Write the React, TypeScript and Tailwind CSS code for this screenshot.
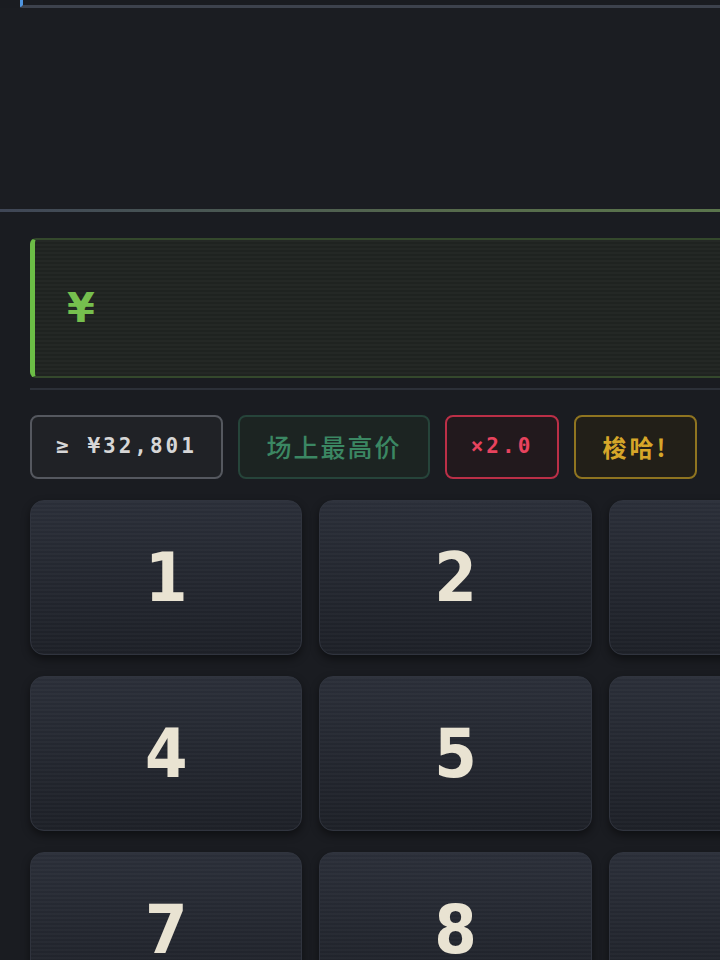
import React from "react";

const scan =
  "bg-[repeating-linear-gradient(180deg,rgba(255,255,255,0.025)_0px,rgba(255,255,255,0.025)_2px,rgba(0,0,0,0)_2px,rgba(0,0,0,0)_4px)]";

function Key({ label }: { label: string }) {
  return (
    <div className="relative h-[155px] rounded-[14px] border border-[#30343e] bg-gradient-to-b from-[#2a2e38] to-[#1d2027] shadow-[0_4px_8px_rgba(0,0,0,0.45)] flex items-center justify-center overflow-hidden">
      <div className={`absolute inset-0 ${scan}`} />
      <span className="relative text-[68px] font-bold leading-none text-[#e9e3d2] [font-family:'DejaVu_Sans_Condensed','DejaVu_Sans',sans-serif]">
        {label}
      </span>
    </div>
  );
}

export default function App() {
  const keys = ["1", "2", "3", "4", "5", "6", "7", "8", "9"];
  return (
    <div className="w-[720px] h-[960px] overflow-hidden bg-[#1a1c21] [font-family:'Noto_Sans','Noto_Sans_CJK_SC',sans-serif]">
      <div className="w-[911px]">
        {/* top panel remnant */}
        <div className="ml-[20px] h-[8px] border-l-[3px] border-b-[3px] border-l-[#4f95e0] border-b-[#3d424d] rounded-bl-[2px]" />
        <div className="h-[201px] bg-[#1b1d22]" />
        <div className="h-[3px] bg-gradient-to-r from-[#3f4656] via-[#566a4c] to-[#5d7d4c]" />

        <div className="px-[30px] pt-[26px]">
          {/* input */}
          <div className="relative h-[140px] rounded-[6px] border-2 border-[#34482c] border-l-[5px] border-l-[#6cbd46] bg-[#1f2320] flex items-center overflow-hidden">
            <div className={`absolute inset-0 ${scan}`} />
            <span className="relative ml-[32px] text-[40px] font-bold text-[#76bf4e] [font-family:'DejaVu_Sans',sans-serif]">
              ¥
            </span>
          </div>
          <div className="mt-[10px] h-[2px] bg-[#2c3038]" />

          {/* chips */}
          <div className="mt-[25px] flex gap-[15px]">
            <div className="w-[193px] h-[64px] rounded-[8px] border-2 border-[#55585f] bg-[#202226] flex items-center justify-center text-[21px] font-bold tracking-[3px] text-[#d6d6d6] [font-family:'DejaVu_Sans_Mono',monospace]">
              ≥ ¥32,801
            </div>
            <div className="w-[192px] h-[64px] rounded-[8px] border-2 border-[#26443a] bg-[#1c2422] flex items-center justify-center text-[25px] font-medium tracking-[2px] text-[#3b8763] [font-family:'Noto_Sans_CJK_SC',sans-serif]">
              场上最高价
            </div>
            <div className="w-[114px] h-[64px] rounded-[8px] border-2 border-[#bb2f47] bg-[#22191d] flex items-center justify-center text-[21px] font-bold tracking-[3px] text-[#e8435e] [font-family:'DejaVu_Sans_Mono',monospace]">
              ×2.0
            </div>
            <div className="w-[123px] h-[64px] rounded-[8px] border-2 border-[#8f7420] bg-[#221f18] flex items-center justify-center text-[24px] font-bold tracking-[3px] text-[#d6a629] [font-family:'Noto_Sans_CJK_SC',sans-serif]">
              梭哈!
            </div>
          </div>

          {/* keypad */}
          <div className="mt-[21px] grid grid-cols-3 gap-x-[17px] gap-y-[21px]">
            {keys.map((k) => (
              <Key key={k} label={k} />
            ))}
          </div>
        </div>
      </div>
    </div>
  );
}
